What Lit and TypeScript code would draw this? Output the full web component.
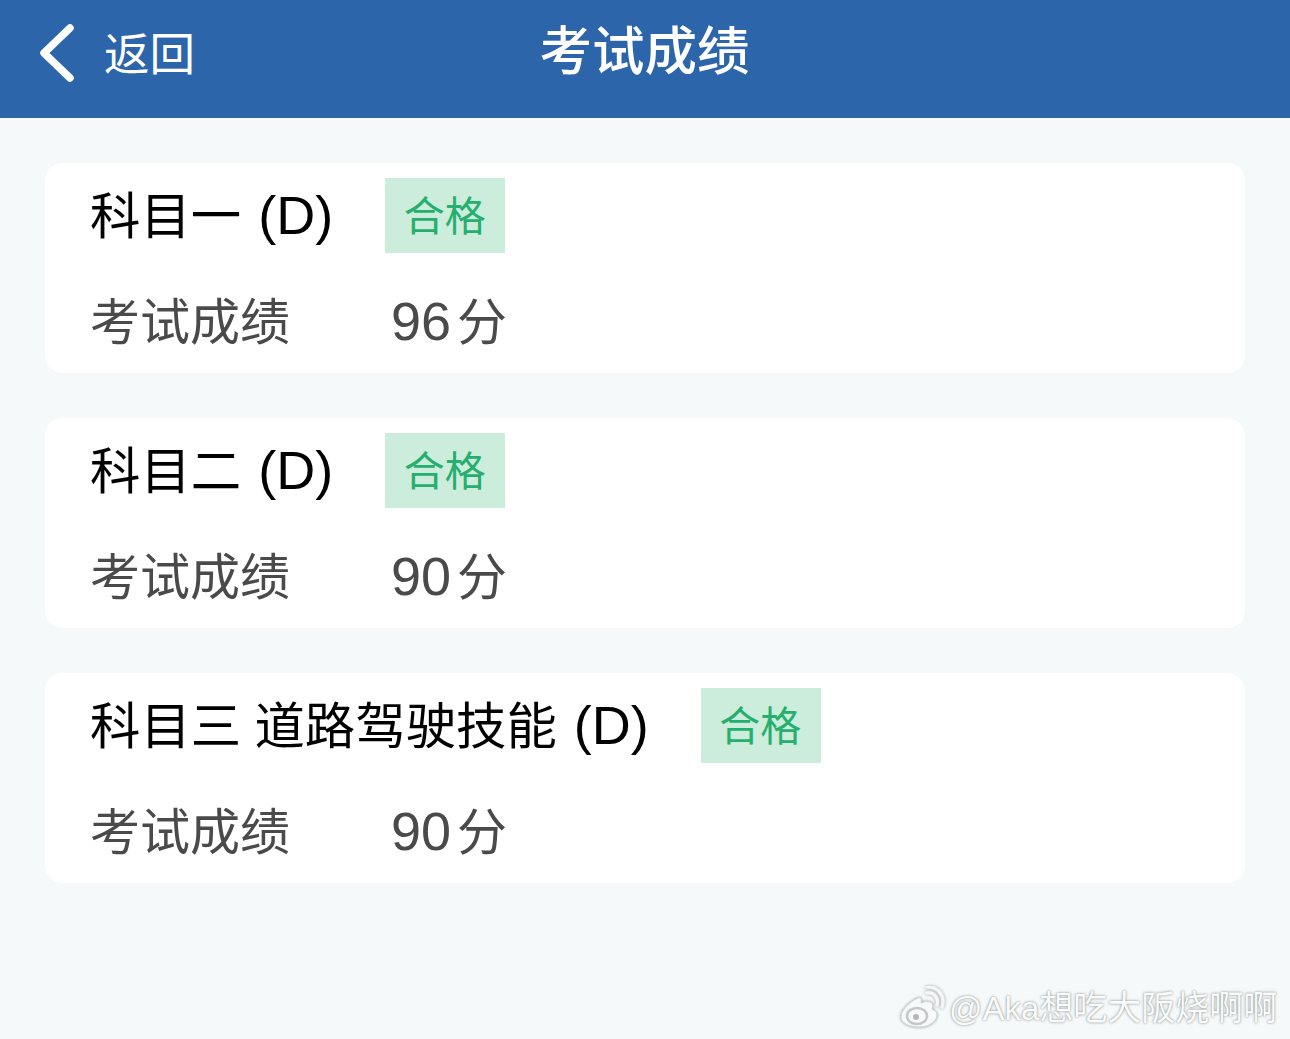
import { LitElement, html, css } from "lit";
import { customElement } from "lit/decorators.js";

const items = [
  { name: "科目一", score: "96" },
  { name: "科目二", score: "90" },
  { name: "科目三 道路驾驶技能", score: "90" },
];

@customElement("app-root")
export class AppRoot extends LitElement {
  static styles = css`
    :host { display: block; position: relative; height: 1039px; overflow: hidden; background: #f5f9fa; font-family: "Noto Sans CJK SC", "Liberation Sans", sans-serif; }
    .header { height: 118px; background: #2c65a9; color: #fff; display: grid; grid-template-columns: 1fr auto 1fr; align-items: center; }
    .back { display: flex; align-items: center; padding-left: 39px; gap: 29px; font-size: 45.5px; line-height: 1; padding-bottom: 12px; }
    .back span { padding-bottom: 2px; }
    .back svg { display: block; }
    .title { font-size: 52.5px; font-weight: 500; line-height: 1; margin-top: -23px; margin-left: -1px; }
    .list { display: flex; flex-direction: column; gap: 45px; padding: 45px 45px 0; }
    .card { height: 210px; box-sizing: border-box; background: #fff; border-radius: 18px; padding: 15px 45px 0; }
    .row1 { display: flex; align-items: center; height: 75px; }
    .name { font-size: 50.4px; line-height: 75px; color: #000; white-space: pre; word-spacing: 2px; padding-bottom: 3px; }
    .d { font-family: "Liberation Sans", sans-serif; margin-left: 17px; font-size: 54px; }
    .tag { margin-left: 52px; width: 120px; height: 75px; box-sizing: border-box; padding-bottom: 4px; padding-right: 1px; background: #ccecdc; color: #25af6e; font-size: 41px; display: flex; align-items: center; justify-content: center; line-height: 1; }
    .row2 { display: flex; align-items: baseline; margin-top: 30px; color: #4a4a4a; font-size: 50px; line-height: 70px; }
    .label { width: 301px; flex: none; }
    .num { font-family: "Liberation Sans", sans-serif; font-size: 54px; }
    .fen { margin-left: 6px; }
    .mark { position: absolute; left: 899px; top: 986px; display: flex; align-items: center; gap: 4px; color: #f9fbfb; font-size: 34px; line-height: 1; white-space: nowrap; text-shadow: 0 0 3px rgba(0,0,0,.4), 0 0 1px rgba(0,0,0,.2); }
    .mark svg { filter: drop-shadow(0 0 1.5px rgba(0,0,0,.35)); }
    .mark .latin { font-family: "Liberation Sans", sans-serif; font-size: 33px; }
  `;

  render() {
    return html`
      <div class="header">
        <div class="back">
          <svg width="36" height="58" viewBox="0 0 36 58"><path d="M31 4 L5 29 L31 54" fill="none" stroke="#fff" stroke-width="7.5" stroke-linecap="round" stroke-linejoin="round"/></svg>
          <span>返回</span>
        </div>
        <div class="title">考试成绩</div>
        <div></div>
      </div>
      <div class="list">
        ${items.map((it) => html`
          <div class="card">
            <div class="row1">
              <span class="name">${it.name}<span class="d">(D)</span></span>
              <span class="tag">合格</span>
            </div>
            <div class="row2">
              <span class="label">考试成绩</span>
              <span class="num">${it.score}</span><span class="fen">分</span>
            </div>
          </div>`)}
      </div>
      <div class="mark">
        <svg width="46" height="42" viewBox="0 0 46 42">
          <path d="M19 12 C10 16 2 24 2 31 C2 37 10 41 20 41 C31 41 38 35 38 29 C38 25 34 24 33 23 C34 20 34 17 31 16 C28 15 24 16 22 17 C23 13 22 11 19 12 Z" fill="#f7f9fa" stroke="#cfd3d6" stroke-width="1"/>
          <ellipse cx="18" cy="30" rx="10" ry="8" fill="none" stroke="#c4c8cb" stroke-width="2.5"/>
          <circle cx="17" cy="31" r="3" fill="#b4b8bb"/>
          <path d="M28 7 C34 6 40 11 38 19 M28 1 C38 0 47 9 43 21" fill="none" stroke="#f4f6f7" stroke-width="3.5" stroke-linecap="round"/>
        </svg>
        <span><span class="latin">@Aka</span>想吃大阪烧啊啊</span>
      </div>
    `;
  }
}
